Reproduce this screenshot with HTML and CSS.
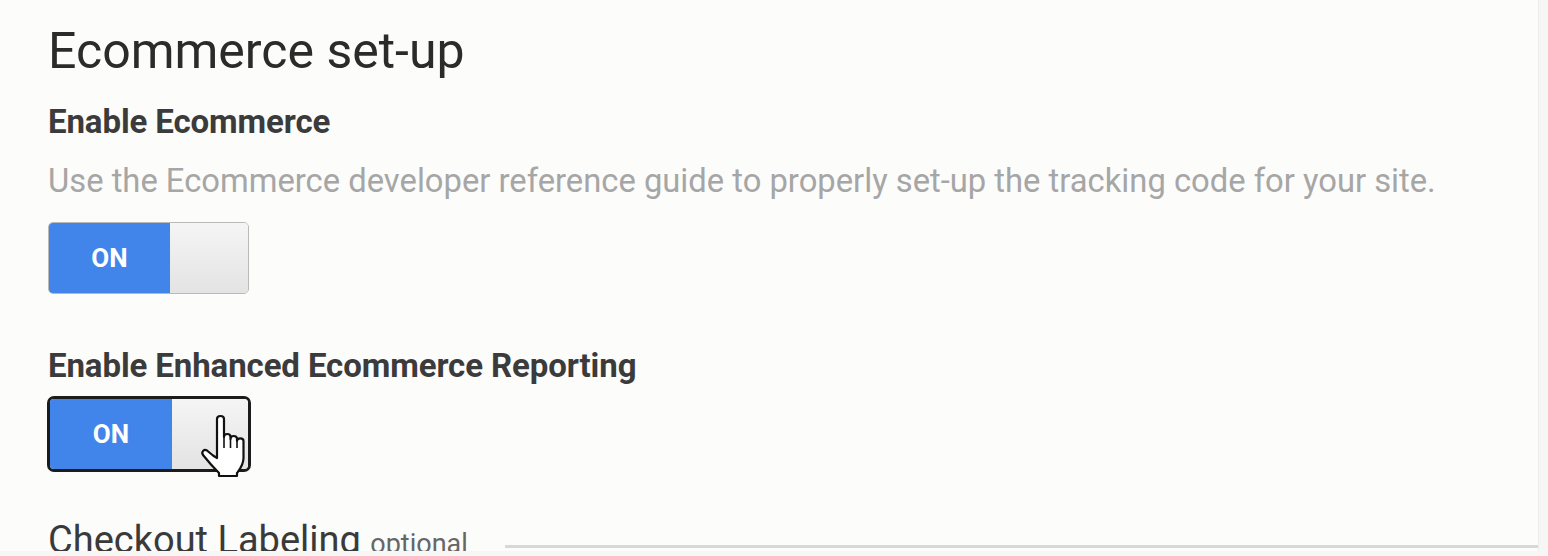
FILE: index.html
```html
<!DOCTYPE html>
<html lang="en">
<head>
    <meta charset="UTF-8">
    <meta name="viewport" content="width=device-width, initial-scale=1.0">
    <title>Ecommerce set-up</title>
    <link rel="stylesheet" href="styles.css">
</head>
<body>

<div class="panel">
  <h1 class="title">Ecommerce set-up</h1>

  <div class="setting">
    <h2 class="label">Enable Ecommerce</h2>
    <p class="hint">Use the Ecommerce developer reference guide to properly set-up the tracking code for your site.</p>
    <div class="toggle">
      <span class="toggle-on">ON</span>
      <span class="toggle-knob"></span>
    </div>
  </div>

  <div class="setting second">
    <h2 class="label">Enable Enhanced Ecommerce Reporting</h2>
    <div class="toggle focused">
      <span class="toggle-on">ON</span>
      <span class="toggle-knob"></span>
      <svg class="cursor" width="50" height="64" viewBox="0 0 50 64">
        <path d="M17 5 C17 1 24 1 24 5 L24 23 C24 19 30.5 19 30.5 23 L30.5 25 C30.5 21 37 21 37 25 L37 27 C37 23.5 43.5 23.5 43.5 27 L43.5 44 C43.5 51 40 55 37 59 L37 62 L19 62 L19 59 C13 53 7 46 3 41 C1 38 4 34.5 7 36.5 L13 41.5 L17 44 Z"
              fill="#fff" stroke="#111" stroke-width="2.2" stroke-linejoin="round"/>
        <path d="M24 23 L24 34 M30.5 25 L30.5 34 M37 27 L37 34" stroke="#111" stroke-width="1.6"/>
      </svg>
    </div>
  </div>

  <div class="checkout">
    <h2 class="checkout-title">Checkout Labeling <small>optional</small></h2>
    <div class="checkout-box"></div>
  </div>
</div>

</body>
</html>
```

FILE: styles.css
```css
body {
    margin: 0;
    background-color: #f6f6f5;
    font-family: Roboto, "Liberation Sans", sans-serif;
    overflow: hidden;
}

.panel {
    width: 1490px;
    height: 551px;
    padding: 0 0 0 48px;
    background: #fcfcfb;
    border-right: 1px solid #ececec;
    overflow: hidden;
}

.title {
    margin: 0;
    padding-top: 21px;
    font-size: 50px;
    font-weight: 400;
    line-height: 60px;
    color: #2b2b2b;
}

.setting {
    margin-top: 21px;
}

.label {
    margin: 0;
    font-size: 33px;
    font-weight: 700;
    line-height: 40px;
    color: #3b3b3b;
    letter-spacing: -0.1px;
}

.hint {
    margin: 19px 0 0;
    font-size: 32.75px;
    line-height: 40px;
    color: #a6a6a6;
}

.toggle {
    position: relative;
    display: flex;
    width: 199px;
    height: 70px;
    margin-top: 21px;
    border: 1px solid #b9b9b9;
    border-radius: 5px;
}

.toggle-on {
    display: flex;
    align-items: center;
    justify-content: center;
    width: 121px;
    background: #4285ea;
    border-radius: 4px 0 0 4px;
    color: #fff;
    font-weight: 700;
    font-size: 26px;
}

.toggle-knob {
    flex: 1;
    background: linear-gradient(#f5f5f5, #e3e3e3);
    border-radius: 0 4px 4px 0;
}

.second {
    margin-top: 52px;
}

.focused {
    width: 198px;
    height: 70px;
    margin-top: 10px;
    margin-left: -1px;
    border: 3px solid #1c1c1c;
    border-radius: 7px;
}

.focused .toggle-on {
    width: 122px;
}

.cursor {
    position: absolute;
    left: 150px;
    top: 15px;
}

.checkout {
    display: flex;
    align-items: flex-start;
    margin-top: 45px;
}

.checkout-title {
    margin: 0;
    width: 457px;
    font-size: 38px;
    font-weight: 400;
    line-height: 46px;
    color: #3a3a3a;
    white-space: nowrap;
}

.checkout-title small {
    font-size: 27px;
    color: #666;
}

.checkout-box {
    flex: 1;
    height: 30px;
    margin-top: 28px;
    border-top: 3px solid #d8d8d8;
}
```
